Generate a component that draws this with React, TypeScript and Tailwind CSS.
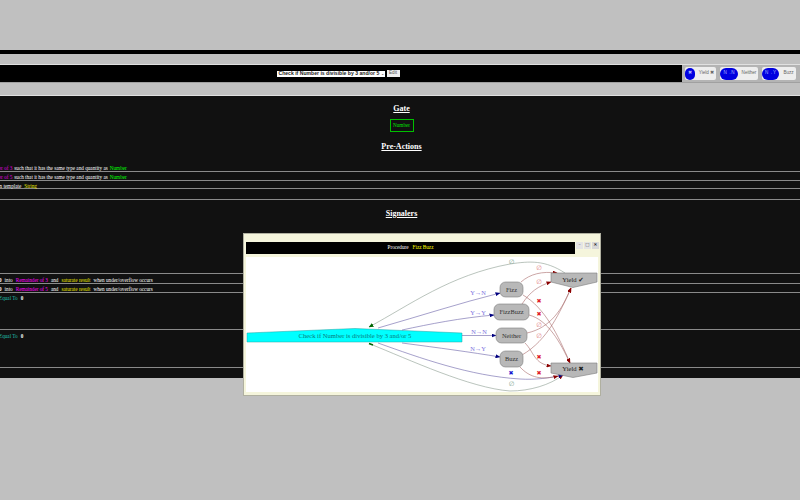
import React from 'react';

const Dot = ({ x, y, c = '#e07878' }: { x: number; y: number; c?: string }) => (
  <text x={x} y={y + 2} fontSize="6.5" textAnchor="middle" fill={c} fontFamily="DejaVu Sans, sans-serif">∅</text>
);

const Cross = ({ x, y, c = '#e0202a' }: { x: number; y: number; c?: string }) => (
  <text x={x} y={y + 2} fontSize="6" textAnchor="middle" fill={c} fontFamily="DejaVu Sans, sans-serif">✖</text>
);

const edgeLabels = [
  { x: 478, y: 295, t: 'Y→N' },
  { x: 478, y: 315, t: 'Y→Y' },
  { x: 479, y: 334, t: 'N→N' },
  { x: 478, y: 351, t: 'N→Y' },
];

const nodes = [
  { x: 500, y: 282, w: 23, h: 15, t: 'Fizz' },
  { x: 494, y: 304, w: 35, h: 16, t: 'FizzBuzz' },
  { x: 496, y: 328, w: 31, h: 15, t: 'Neither' },
  { x: 500, y: 351, w: 23, h: 16, t: 'Buzz' },
];

const Graph = () => (
  <svg viewBox="246 257 352 135" className="w-[352px] h-[135px] block">
    <defs>
      <marker id="blue" markerWidth="5" markerHeight="4" refX="4.5" refY="2" orient="auto" markerUnits="userSpaceOnUse">
        <path d="M0 0L5 2L0 4z" fill="#000080" />
      </marker>
      <marker id="red" markerWidth="5" markerHeight="4" refX="4.5" refY="2" orient="auto" markerUnits="userSpaceOnUse">
        <path d="M0 0L5 2L0 4z" fill="#8b0000" />
      </marker>
      <marker id="green" markerWidth="5" markerHeight="4" refX="4.5" refY="2" orient="auto" markerUnits="userSpaceOnUse">
        <path d="M0 0L5 2L0 4z" fill="#006400" />
      </marker>
    </defs>

    <polygon points="247,333 355,328.5 462,333 462,342 247,342" fill="#00ffff" stroke="#20a0a0" strokeWidth="0.5" />
    <text x="355" y="338" fontSize="6.6" textAnchor="middle" fill="#0a7a7a" fontFamily="Liberation Serif, serif">Check if Number is divisible by 3 and/or 5</text>

    {/* gray edges */}
    <g fill="none" stroke="#8c9c90" strokeWidth="0.6">
      <path d="M565 273C545 260 530 261 510 264C450 275 410 305 369 327" markerEnd="url(#green)" />
      <path d="M369 343.5C410 360 470 388 510 391C530 391 550 385 563 375" markerEnd="url(#red)" />
    </g>
    <path d="M369 343.5L373 345" stroke="#006400" strokeWidth="1.6" />

    {/* blue edges */}
    <g fill="none" stroke="#6a62a8" strokeWidth="0.6">
      <path d="M378 328C420 316 460 303 500 293" markerEnd="url(#blue)" />
      <path d="M402 330C430 324 460 318 494 315" markerEnd="url(#blue)" />
      <path d="M462 335.5L496 335.5" markerEnd="url(#blue)" />
      <path d="M402 343C440 348 470 352 500 357" markerEnd="url(#blue)" />
      <path d="M378 343C420 358 470 376 520 379C535 380 550 378 563 375" markerEnd="url(#blue)" />
    </g>

    {/* red edges */}
    <g fill="none" stroke="#a86a6a" strokeWidth="0.6">
      <path d="M521 282C530 274 542 271 557 273" markerEnd="url(#red)" />
      <path d="M522 304C530 292 538 286 551 282" markerEnd="url(#red)" />
      <path d="M527 333C550 328 562 310 571 288" markerEnd="url(#red)" />
      <path d="M522 355C548 340 560 312 571 288" markerEnd="url(#red)" />
      <path d="M523 295C545 308 558 335 570 363" markerEnd="url(#red)" />
      <path d="M529 315C548 320 560 342 570 363" markerEnd="url(#red)" />
      <path d="M525 343C534 352 534 364 551 366" markerEnd="url(#red)" />
      <path d="M520 367C530 378 542 380 558 376" markerEnd="url(#red)" />
    </g>

    {nodes.map((n) => (
      <g key={n.t}>
        <rect x={n.x} y={n.y} width={n.w} height={n.h} rx="5.5" fill="#b8b8b8" stroke="#7c7c7c" strokeWidth="0.6" />
        <text x={n.x + n.w / 2} y={n.y + n.h / 2 + 2} fontSize="6.4" textAnchor="middle" fill="#333" fontFamily="Liberation Serif, serif">{n.t}</text>
      </g>
    ))}

    <polygon points="551,273 597,273 597,282 573,287.5 551,282" fill="#b8b8b8" stroke="#7c7c7c" strokeWidth="0.6" />
    <text x="573" y="282" fontSize="6.6" textAnchor="middle" fill="#222" fontFamily="Liberation Serif, DejaVu Sans, serif">Yield ✔</text>
    <polygon points="551,363 597,363 597,373 573,377.5 551,373" fill="#b8b8b8" stroke="#7c7c7c" strokeWidth="0.6" />
    <text x="573" y="371" fontSize="6.6" textAnchor="middle" fill="#222" fontFamily="Liberation Serif, DejaVu Sans, serif">Yield ✖</text>

    {edgeLabels.map((l) => (
      <text key={l.t} x={l.x} y={l.y} fontSize="6.4" textAnchor="middle" fill="#7a70e0" fontFamily="Liberation Serif, DejaVu Sans, serif">{l.t}</text>
    ))}

    <Dot x={511.5} y={262} c="#7aa08a" />
    <Dot x={511.5} y={384} c="#7aa08a" />
    <Dot x={539} y={268} />
    <Dot x={539} y={282} />
    <Dot x={539} y={325} />
    <Dot x={539} y={336} />
    <Cross x={539} y={301} />
    <Cross x={539} y={314} />
    <Cross x={539} y={357} />
    <Cross x={539} y={373} />
    <Cross x={511} y={373} c="#1a1ad0" />
  </svg>
);

const Heading = ({ h, children }: { h: string; children: React.ReactNode }) => (
  <div className={`${h} flex items-center justify-center pl-[3px] text-[8px] font-bold underline text-white`}>{children}</div>
);

const Row = ({ h, ml, gap, pt, children }: { h: string; ml: string; gap: string; pt: string; children: React.ReactNode }) => (
  <div className={`${h} ${ml} ${gap} ${pt} border-b border-[#8a8a8a] flex items-start text-[5.2px] leading-[6px] whitespace-nowrap text-white overflow-visible`}>
    {children}
  </div>
);

const Pill = ({ mark, label, w, bw }: { mark: string; label: string; w: string; bw: string }) => (
  <div className={`${w} h-[13px] bg-[#eeeeee] rounded-[2px] flex items-center gap-[2px] font-['Liberation_Sans',sans-serif] text-[4.6px] text-[#666]`}>
    <div className={`${bw} h-[12px] rounded-full bg-[#0000e0] flex items-center justify-center text-[#aab4ff]`}>{mark}</div>
    <div className="flex-1 text-center">{label}</div>
  </div>
);

export default function App() {
  return (
    <div className="relative w-[800px] h-[500px] overflow-hidden bg-[#c0c0c0] font-['Liberation_Serif',serif]">
      <div className="h-[50px]" />
      <div className="h-[4px] bg-black" />
      <div className="h-[11px] border-b border-[#e0e0e0]" />

      {/* toolbar */}
      <div className="h-[18px] flex items-stretch border-b border-[#a0a0a0]">
        <div className="w-[682px] h-[17px] bg-black flex items-center justify-center gap-[2px] pr-[6px]">
          <div className="w-[108px] h-[6px] bg-white flex items-center justify-between pl-[2px] pr-[1px] font-['Liberation_Sans',sans-serif] text-[5.1px] font-bold text-[#222] whitespace-nowrap">
            <span>Check if Number is divisible by 3 and/or 5</span>
            <span className="text-[4px]">⌄</span>
          </div>
          <div className="w-[13px] h-[7px] bg-[#eeeeee] flex items-center justify-center font-['Liberation_Sans',sans-serif] text-[4.6px] text-[#555]">Edit</div>
        </div>
        <div className="flex-1 flex items-center gap-[4px] pl-[3px] bg-[#b4b4b4]">
          <Pill mark="✖" label="Yield ✖" w="w-[31px]" bw="w-[10px]" />
          <Pill mark="N→N" label="Neither" w="w-[38px]" bw="w-[18px]" />
          <Pill mark="N→Y" label="Buzz" w="w-[34px]" bw="w-[17px]" />
        </div>
      </div>
      <div className="h-[13px] border-b border-[#e0e0e0]" />

      {/* main panel */}
      <div className="h-[282px] bg-[#111111] text-white">
        <Heading h="h-[23px] pt-[2px]">Gate</Heading>
        <div className="h-[13px] flex justify-center pl-[3px]">
          <div className="w-[24px] border border-[#00c000] flex items-center justify-center text-[5.2px] text-[#00e000]">Number</div>
        </div>
        <Heading h="h-[30px]">Pre-Actions</Heading>

        <Row h="h-[10px]" ml="-ml-[20px]" gap="gap-[2px]" pt="pt-[3px]">
          <span className="text-[#e000e0]">Remainder of 3</span>
          <span>such that it has the same type and quantity as</span>
          <span className="text-[#00ff00]">Number</span>
        </Row>
        <Row h="h-[9px]" ml="-ml-[20px]" gap="gap-[2px]" pt="pt-[2px]">
          <span className="text-[#e000e0]">Remainder of 5</span>
          <span>such that it has the same type and quantity as</span>
          <span className="text-[#00ff00]">Number</span>
        </Row>
        <Row h="h-[8px]" ml="-ml-[8px]" gap="gap-[3px]" pt="pt-[2px]">
          <span>from template</span>
          <span className="text-[#e8e800]">String</span>
        </Row>
        <div className="h-[11px] border-b border-[#8a8a8a]" />

        <Heading h="h-[26px] pt-[1px]">Signalers</Heading>
        <div className="h-[48px] border-b border-[#8a8a8a]" />

        <Row h="h-[10px]" ml="-ml-[1px]" gap="gap-[3px]" pt="pt-[3px]">
          <span className="font-bold">0</span>
          <span>into</span>
          <span className="text-[#ff00ff]">Remainder of 3</span>
          <span>and</span>
          <span className="text-[#e8e800]">saturate result</span>
          <span>when under/overflow occurs</span>
        </Row>
        <Row h="h-[9px]" ml="-ml-[1px]" gap="gap-[3px]" pt="pt-[2px]">
          <span className="font-bold">0</span>
          <span>into</span>
          <span className="text-[#ff00ff]">Remainder of 5</span>
          <span>and</span>
          <span className="text-[#e8e800]">saturate result</span>
          <span>when under/overflow occurs</span>
        </Row>
        <Row h="h-[37px]" ml="-ml-[1px]" gap="gap-[3px]" pt="pt-[2px]">
          <span className="text-[#20c0b0]">Equal To</span>
          <span className="font-bold">0</span>
        </Row>
        <Row h="h-[38px]" ml="-ml-[1px]" gap="gap-[3px]" pt="pt-[3px]">
          <span className="text-[#20c0b0]">Equal To</span>
          <span className="font-bold">0</span>
        </Row>
      </div>

      {/* procedure dialog */}
      <div className="absolute left-[243px] top-[233px] w-[358px] h-[163px] bg-[#f5f5dc] border border-[#b0b0a0] pt-[8px] pl-[2px]">
        <div className="flex items-start gap-[1px]">
          <div className="w-[329px] h-[12px] bg-black flex items-center justify-center gap-[4px] text-[5.2px] text-white">
            <span>Procedure</span>
            <span className="text-[#ffff00]">Fizz Buzz</span>
          </div>
          <div className="flex gap-[1px] font-['DejaVu_Sans',sans-serif] text-[4.5px] leading-none">
            <div className="w-[7px] h-[7px] bg-[#e4e4e4] text-[#555] flex items-center justify-center">–</div>
            <div className="w-[7px] h-[7px] bg-[#e4e4e4] text-[#555] flex items-center justify-center">□</div>
            <div className="w-[7px] h-[7px] bg-[#d8d8d8] text-black flex items-center justify-center">✕</div>
          </div>
        </div>
        <div className="mt-[3px] w-[352px] h-[135px] bg-white">
          <Graph />
        </div>
      </div>
    </div>
  );
}
